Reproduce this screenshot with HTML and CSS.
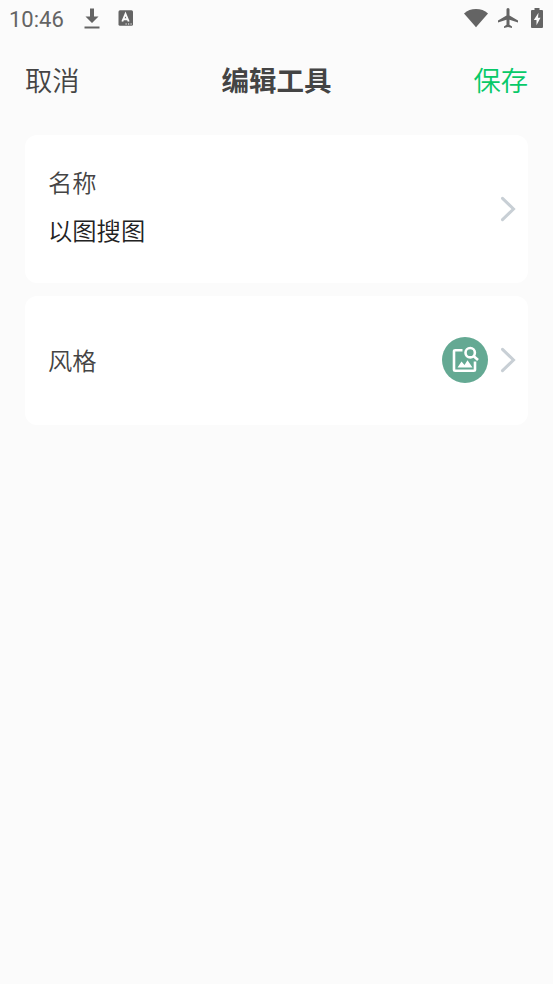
FILE: index.html
```html
<!DOCTYPE html>
<html lang="zh-CN">
<head>
<meta charset="utf-8">
<title>编辑工具</title>
<link rel="stylesheet" href="styles.css">
</head>
<body>
<div class="status">
  <span class="time">10:46</span>
  <svg class="download" width="16" height="22" viewBox="0 0 16 22"><path d="M6 0.500h4v8h4.500L8 15 1.500 8.500H6z"/><path d="M0.500 18.500h15v2h-15z"/></svg>
  <svg class="app" width="16" height="16" viewBox="0 0 16 16"><rect x=".5" y=".3" width="14.500" height="15.500" rx="1.500"/><path class="letter" d="M4.300 11.500 7.500 4l3.200 7.500M5.500 9.200h4"/><path class="dots" d="M7.500 14h1.200M10 14h1.200M12.500 14h1.200"/></svg>
  <span class="spacer"></span>
  <svg class="wifi" width="24" height="19" viewBox="0 0 24 19"><path d="M0 4.400Q5 0 12 0t12 4.400L12 18.300z"/></svg>
  <svg class="plane" width="20" height="21" viewBox="0 0 20 21"><path d="M10 0c1 0 1.500.8 1.500 1.800v5.700L20 12.500v2l-8.500-2.700v5l2.500 1.700v1.600L10 19l-4 1.100v-1.600l2.500-1.700v-5L0 14.500v-2l8.500-5V1.800C8.500.8 9 0 10 0z"/></svg>
  <svg class="battery" width="12" height="20" viewBox="0 0 12 20"><path d="M3.500 0h5v2H11q1 0 1 1v16q0 1-1 1H1q-1 0-1-1V3q0-1 1-1h2.500z"/><path class="bolt" d="M7.500 4.800 2.800 12h2.700v5.200L9.500 9.700H7z"/></svg>
</div>
<header class="bar">
  <span class="cancel">取消</span>
  <h1 class="title">编辑工具</h1>
  <span class="save">保存</span>
</header>
<main class="cards">
  <section class="card card-name">
    <div class="text"><div class="label">名称</div><div class="value">以图搜图</div></div>
    <svg class="chevron" width="16" height="26" viewBox="0 0 16 26"><path d="M2.500 2.300 13.500 13 2.500 23.700"/></svg>
  </section>
  <section class="card card-style">
    <div class="text label">风格</div>
    <span class="badge"><svg width="28" height="28" viewBox="0 0 28 28"><path class="frame" d="M11.500 4.200H4.200q-1.200 0-1.200 1.200v18.200q0 1.200 1.200 1.200h18.600q1.200 0 1.200-1.200V15.500"/><path class="hills" d="M6.500 21.400 10.500 15.500l3 3.500 3-4.700 5 7.100z"/><circle class="lens" cx="19.200" cy="6.700" r="4.700"/><path class="frame" d="m22.500 10 4.500 4"/></svg></span>
    <svg class="chevron" width="16" height="26" viewBox="0 0 16 26"><path d="M2.500 2.300 13.500 13 2.500 23.700"/></svg>
  </section>
</main>
</body>
</html>
```
FILE: styles.css
```css
* { box-sizing: border-box; }
body {
  margin: 0;
  height: 984px;
  background: #fbfbfb;
  color: #444;
  font-family: "Noto Sans CJK SC", sans-serif;
}
svg { display: block; flex: none; }
.status {
  display: flex;
  align-items: flex-start;
  height: 40px;
  padding: 8px 10px 0 9px;
  fill: #646464;
}
.time {
  width: 75px;
  font: 22px/24px Roboto, sans-serif;
  color: #646464;
}
.app { margin: 2px 0 0 18px; }
.letter { fill: none; stroke: #fbfbfb; stroke-width: 1.900; }
.dots { fill: none; stroke: #fbfbfb; stroke-width: 1.200; }
.spacer { flex: 1; }
.wifi { margin: 1px 10px 0 0; }
.plane { margin-right: 13px; }
.bolt { fill: #fbfbfb; }
.bar {
  display: grid;
  grid-template-columns: 1fr auto 1fr;
  align-items: center;
  height: 78px;
  padding: 0 25px;
  font-size: 27.300px;
  font-weight: 350;
  line-height: 40px;
}
.title { margin: 0; font-size: 27.500px; font-weight: 700; }
.save { justify-self: end; color: #07c968; }
.cards {
  display: flex;
  flex-direction: column;
  gap: 13px;
  padding: 17px 25px 0 25px;
}
.card {
  display: flex;
  align-items: center;
  padding: 0 12px 0 23px;
  border-radius: 12px;
  background: #fff;
}
.card-name { height: 148px; }
.card-style { height: 129px; padding-bottom: 1px; }
.text { flex: 1; }
.label, .value { font-size: 24.300px; font-weight: 350; line-height: 48px; }
.card-name .text { margin-top: -6px; }
.card-style .text { margin-top: -1px; }
.value { color: #222; }
.chevron { fill: none; stroke: #c8cfd5; stroke-width: 3; stroke-linecap: round; }
.badge {
  display: grid;
  place-items: center;
  width: 46px;
  height: 46px;
  margin-right: 12px;
  border-radius: 50%;
  background: #64a993;
}
.frame, .lens { fill: none; stroke: #fff; stroke-width: 2.600; }
.hills { fill: #fff; }
```
